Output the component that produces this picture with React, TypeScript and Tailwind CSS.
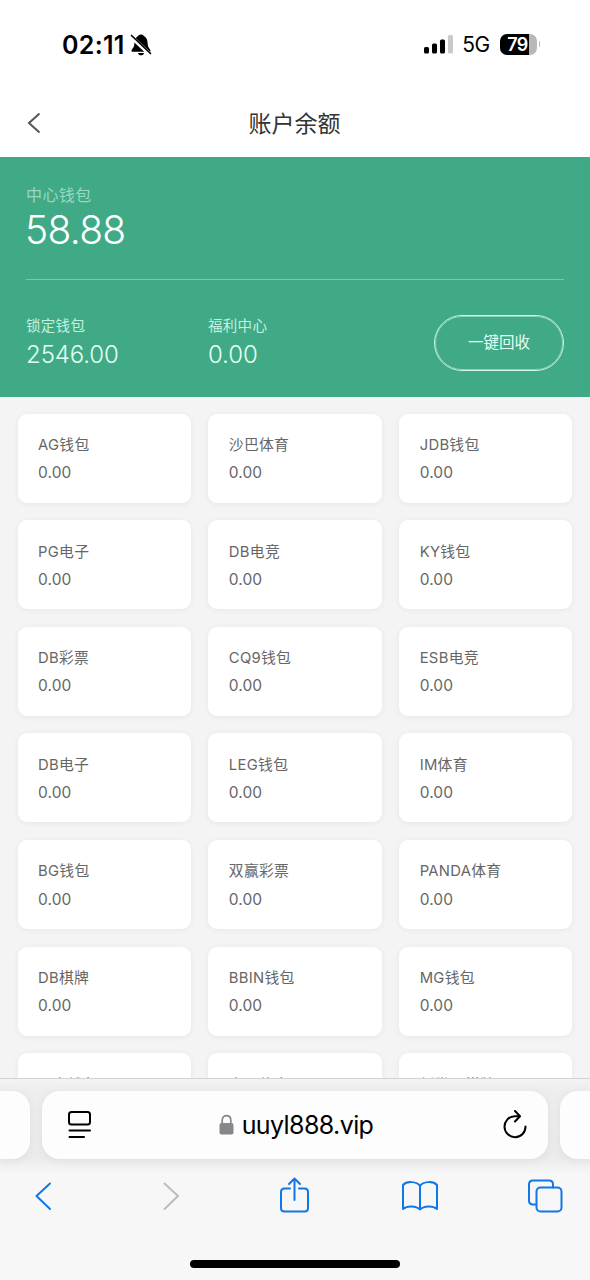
import type { ReactNode } from 'react';

interface Wallet {
    name: string;
    amount: string;
}

const WALLETS: Wallet[] = [
    'AG钱包', '沙巴体育', 'JDB钱包',
    'PG电子', 'DB电竞', 'KY钱包',
    'DB彩票', 'CQ9钱包', 'ESB电竞',
    'DB电子', 'LEG钱包', 'IM体育',
    'BG钱包', '双赢彩票', 'PANDA体育',
    'DB棋牌', 'BBIN钱包', 'MG钱包',
    '瓦力钱包', '皇冠体育', '新世界棋牌',
].map((name) => ({ name, amount: '0.00' }));

function StatusBar() {
    return (
        <div className="flex h-[90px] items-start justify-between pt-[30px] pr-[49px] pl-[62px]">
            <div className="flex items-center gap-[5px]">
                <span className="pt-px text-[25px] leading-7 font-semibold tracking-[0.3px]">02:11</span>
                <svg width="22" height="24" viewBox="0 0 22 24">
                    <path d="M11 1.500C8.700 1.500 8.200 3.200 6.600 4.200C4.800 5.700 4.500 8 4.300 11.500C4.100 14.500 2 15.800 1.500 17.400C1.300 18.300 1.800 18.800 2.700 18.800H19.300C20.200 18.800 20.700 18.300 20.500 17.400C20 15.800 17.900 14.500 17.700 11.500C17.500 8 17.200 5.700 15.400 4.200C13.800 3.200 13.300 1.500 11 1.500Z" />
                    <path d="M8 20H14C13.700 21.500 12.600 22.300 11 22.300S8.300 21.500 8 20Z" />
                    <path d="M1 3.500L20.500 22" stroke="white" strokeWidth="4" />
                    <path d="M1.500 2.500L20.500 20.500" stroke="black" strokeWidth="1.700" strokeLinecap="round" />
                </svg>
            </div>
            <div className="flex h-7 items-center">
                <svg width="30" height="20" viewBox="0 0 30 20">
                    <rect x="0" y="13" width="5" height="6.500" rx="1.500" />
                    <rect x="8" y="9.500" width="5" height="10" rx="1.500" />
                    <rect x="16" y="5.500" width="5" height="14" rx="1.500" />
                    <rect x="24" y="1" width="5" height="18.500" rx="1.500" fill="#c9c9c9" />
                </svg>
                <span className="ml-[8px] pt-px text-[21px] leading-7 tracking-[-0.3px]">5G</span>
                <div className="ml-[10px] flex h-[21px] w-[37px] items-center justify-center overflow-hidden rounded-[7px] bg-[linear-gradient(to_right,#000_79%,#b8b8b8_79%)] pr-[2px] text-[18px] font-semibold tracking-[-0.6px] text-white">
                    79
                </div>
                <div className="mr-px ml-[1.500px] h-[6px] w-[1.500px] rounded-r-full bg-[#b8b8b8]" />
            </div>
        </div>
    );
}

function NavBar() {
    return (
        <div className="grid h-[67px] grid-cols-[60px_1fr_60px] items-center">
            <svg className="ml-[27px]" width="14" height="22" viewBox="0 0 14 22" fill="none" stroke="#555" strokeWidth="2">
                <path d="M12.500 0.500L2 10L12.500 19.500" />
            </svg>
            <h1 className="-ml-px pt-px text-center text-[23px] leading-8 text-[#333]">账户余额</h1>
        </div>
    );
}

function Balance() {
    return (
        <div className="h-[240px] bg-[#40aa86] px-[26px] pt-[26px] text-[#e3fff4]">
            <div className="text-[16px] leading-6 tracking-[0.4px] text-[#98d8c1]">中心钱包</div>
            <div className="-ml-px text-[39px] leading-[46px] font-[350] tracking-[-0.7px] text-white">58.88</div>
            <div className="mt-[26px] h-px bg-[#75c9ab]" />
            <div className="mt-[35px] flex">
                <div className="w-[182px]">
                    <div className="text-[14.500px] leading-[22px] tracking-[0.3px] text-[#c5f0df]">锁定钱包</div>
                    <div className="mt-[2px] text-[24px] leading-8 font-[350] tracking-[-0.1px]">2546.00</div>
                </div>
                <div>
                    <div className="text-[14.500px] leading-[22px] tracking-[0.3px] text-[#c5f0df]">福利中心</div>
                    <div className="mt-[2px] text-[24px] leading-8 font-[350] tracking-[-0.1px]">0.00</div>
                </div>
                <button className="ml-auto h-14 w-[130px] rounded-full border-[1.500px] border-[#d2f7e9] text-[15.500px] text-[#e3fff4] outline-[0.500px] -outline-offset-2 outline-[#8dd3b9]">
                    一键回收
                </button>
            </div>
        </div>
    );
}

function WalletCard({ name, amount }: Wallet) {
    return (
        <div className="h-[89px] rounded-[9px] bg-white pt-[19.400px] pl-[20.500px] text-[#666] shadow-[0_1px_6px_rgba(0,0,0,0.06)]">
            <div className="text-[14.800px] leading-6 tracking-[0.3px]">{name}</div>
            <div className="mt-[4.200px] text-[15.500px] leading-6 tracking-[0.1px]">{amount}</div>
        </div>
    );
}

function ToolIcon({ children, color = '#1277e6' }: { children: ReactNode; color?: string }) {
    return (
        <svg width="40" height="40" viewBox="0 0 40 40" fill="none" stroke={color} strokeWidth="2" strokeLinecap="round" strokeLinejoin="round">
            {children}
        </svg>
    );
}

function BrowserBar() {
    return (
        <div className="h-[202px] shrink-0 overflow-hidden border-t border-[#d2d2d2] bg-[linear-gradient(to_bottom,#f3f3f3_0,#ededed_12px,#ebebeb_78px,#f7f7f7_96px)]">
            <div className="mt-3 flex h-[68px] justify-between">
                <div className="w-[30px] rounded-r-[18px] bg-[#fdfdfd] shadow-[0_2px_10px_rgba(0,0,0,0.06)]" />
                <div className="flex w-[506px] items-center justify-between rounded-[18px] bg-[#fdfdfd] pr-[21px] pl-[23px] shadow-[0_2px_10px_rgba(0,0,0,0.06)]">
                    <svg width="26" height="30" viewBox="0 0 26 30" fill="none" stroke="black" strokeWidth="2" strokeLinecap="round">
                        <rect x="4" y="2" width="21" height="12.500" rx="2.500" />
                        <path d="M4.500 20.500H25M4.500 27H19" />
                    </svg>
                    <div className="flex items-center gap-[8px]">
                        <svg width="15" height="22" viewBox="0 0 15 22">
                            <rect x="0.500" y="9" width="14" height="11.500" rx="2" fill="#87878b" />
                            <path d="M3.200 10V6.200C3.200 3.300 5 1.700 7.500 1.700S11.800 3.300 11.800 6.200V10" fill="none" stroke="#87878b" strokeWidth="1.700" />
                        </svg>
                        <span className="text-[25px] leading-8 tracking-[-0.600px]">uuyl888.vip</span>
                    </div>
                    <svg width="26" height="30" viewBox="0 0 26 30" fill="none" stroke="black" strokeWidth="2" strokeLinecap="round" strokeLinejoin="round">
                        <path d="M18 6.200H13.500A10.500 10.500 0 1 0 24.500 16.500" />
                        <path d="M14 1L19 6.200L14 11.500" />
                    </svg>
                </div>
                <div className="w-[30px] rounded-l-[18px] bg-[#fdfdfd] shadow-[0_2px_10px_rgba(0,0,0,0.06)]" />
            </div>
            <div className="mt-[17px] flex justify-between pr-[25px] pl-[23px]">
                <ToolIcon><path d="M27 7.500L13.500 20L27 33" /></ToolIcon>
                <ToolIcon color="#bcbcbe"><path d="M15.500 7.500L29 20L15.500 33" /></ToolIcon>
                <ToolIcon>
                    <path d="M16 12.500H10.500Q7 12.500 7 16V32Q7 35.500 10.500 35.500H30.500Q34 35.500 34 32V16Q34 12.500 30.500 12.500H25" />
                    <path d="M20.500 24V2.500M15 8L20.500 2.500L26 8" />
                </ToolIcon>
                <ToolIcon>
                    <path d="M20 10C17 5.500 7 4.500 3 9V33C7 29.500 16 29.500 20 33.500C24 29.500 33 29.500 37 33V9C33 4.500 23 5.500 20 10ZM20 10V33.500" />
                </ToolIcon>
                <ToolIcon>
                    <path d="M11 28.500H8Q4 28.500 4 24.500V8.500Q4 4.500 8 4.500H24Q28 4.500 28 8.500V11.500" />
                    <rect x="11.500" y="11.500" width="25" height="24" rx="4" />
                </ToolIcon>
            </div>
            <div className="mx-auto mt-[44px] h-2 w-[210px] rounded-full bg-black" />
        </div>
    );
}

export default function App() {
    return (
        <div className="flex h-[1280px] w-[590px] flex-col overflow-hidden bg-white font-[Inter,'Noto_Sans_CJK_SC',sans-serif] text-black">
            <StatusBar />
            <NavBar />
            <Balance />
            <div className="grid min-h-0 flex-1 grid-cols-3 content-start gap-x-[17.500px] gap-y-[17.600px] overflow-hidden bg-[#f4f4f4] px-[17.500px] pt-[16.600px]">
                {WALLETS.map((wallet) => (
                    <WalletCard key={wallet.name} {...wallet} />
                ))}
            </div>
            <BrowserBar />
        </div>
    );
}
